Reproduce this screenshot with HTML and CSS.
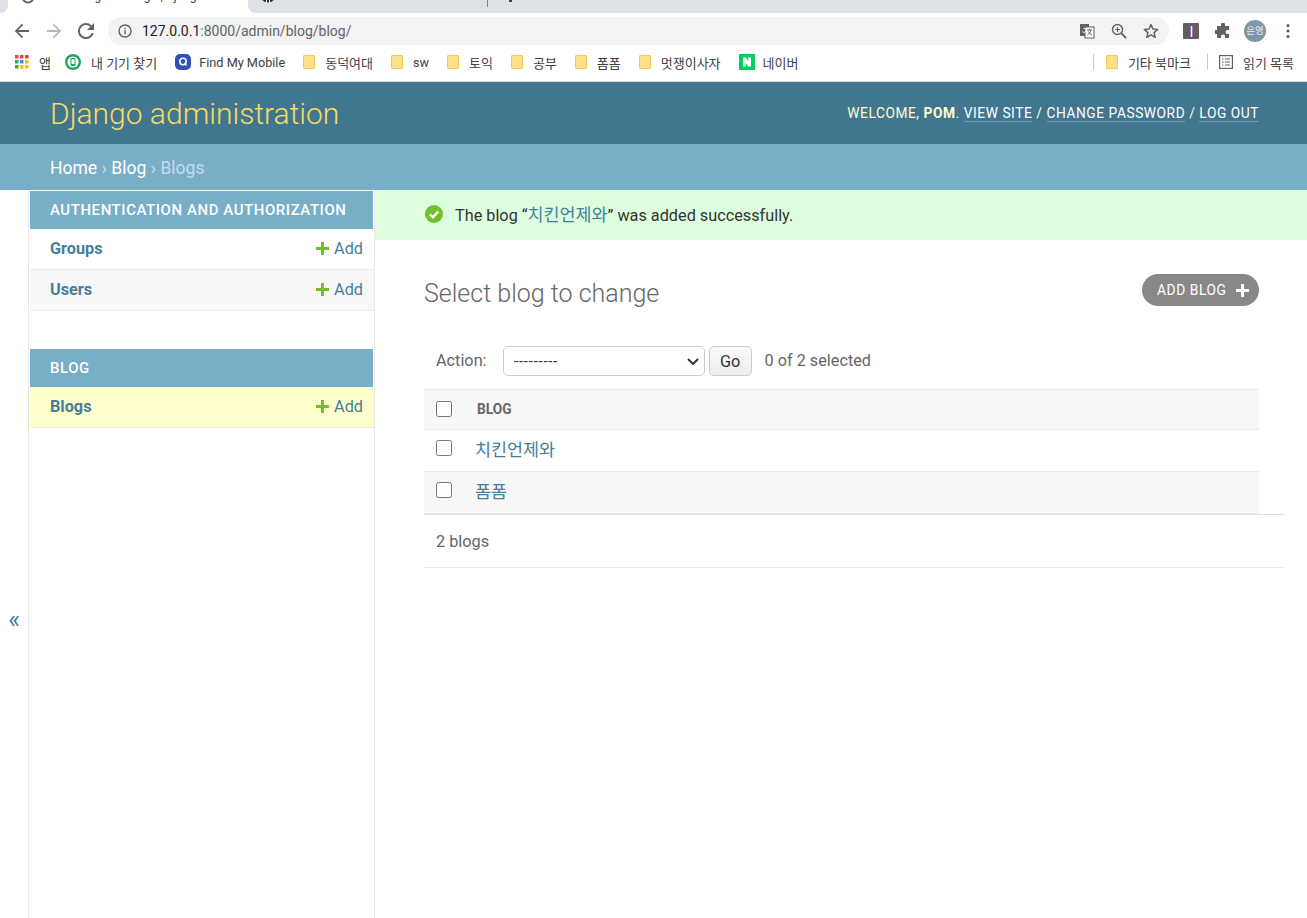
FILE: index.html
```html
<!DOCTYPE html>
<html lang="en">
<head>
    <meta charset="UTF-8">
    <title>Select blog to change | Django site admin</title>
    <link rel="stylesheet" href="styles.css">
</head>
<body>
    <!-- browser chrome -->
    <div class="tabstrip">
        <div class="tab-corner"></div>
        <div class="tab-active">
            <svg width="16" height="16" viewBox="0 0 16 16"><circle cx="8" cy="-3" r="5.500" fill="none" stroke="#5f6368" stroke-width="2"/></svg>
            <span class="tab-title">Select blog to change | Django site admin</span>
        </div>
        <div class="tab-rest">
            <svg width="16" height="16" viewBox="0 0 16 16"><circle cx="8" cy="-5" r="7.500" fill="#24292e"/><path d="M6.500 0v3M9.500 0v3" stroke="#fff" stroke-width="1"/></svg>
            <div class="tab-sep"></div>
            <div class="tab-dot"></div>
        </div>
    </div>
    <div class="toolbar">
        <button class="nav-btn" aria-label="Back">
            <svg width="16" height="16" viewBox="0 0 16 16"><path d="M15 7H4.200l5-5L8 .8 .8 8 8 15.200l1.200-1.200-5-5H15z" fill="#5f6368"/></svg>
        </button>
        <button class="nav-btn" aria-label="Forward">
            <svg width="16" height="16" viewBox="0 0 16 16"><path d="M1 7h10.800l-5-5L8 .8 15.200 8 8 15.200 6.800 14l5-5H1z" fill="#b4b7bb"/></svg>
        </button>
        <button class="nav-btn" aria-label="Reload">
            <svg width="16" height="16" viewBox="0 0 16 16"><path d="M13.600 2.400A7.900 7.900 0 0 0 8 0a8 8 0 1 0 7.700 10h-2.100A6 6 0 1 1 8 2c1.700 0 3.100.7 4.200 1.800L9 7h7V0z" fill="#5f6368"/></svg>
        </button>
        <div class="omnibox">
            <svg class="omni-info" width="14" height="14" viewBox="0 0 14 14"><circle cx="7" cy="7" r="6" fill="none" stroke="#5f6368" stroke-width="1.400"/><rect x="6.300" y="6" width="1.400" height="4.200" fill="#5f6368"/><rect x="6.300" y="3.700" width="1.400" height="1.400" fill="#5f6368"/></svg>
            <span class="omni-url"><span class="omni-host">127.0.0.1</span>:8000/admin/blog/blog/</span>
            <svg class="omni-icon" width="16" height="16" viewBox="0 0 16 16"><rect x="1" y="1" width="9" height="12" fill="#5f6368"/><rect x="6" y="4" width="9" height="11" fill="#fff" stroke="#5f6368"/><path d="M3.500 8.500a2 2 0 1 0 1-3" fill="none" stroke="#fff"/><path d="M8 7h5M10.500 6v1M12 7c-.5 2-2 4-3.500 5M9.500 8.500c.7 1.500 2 3 3.500 3.500" fill="none" stroke="#5f6368"/></svg>
            <svg class="omni-icon" width="16" height="16" viewBox="0 0 16 16"><circle cx="6.500" cy="6.500" r="5" fill="none" stroke="#5f6368" stroke-width="1.500"/><path d="M10.200 10.200 15 15" stroke="#5f6368" stroke-width="1.800"/><path d="M4 6.500h5M6.500 4v5" stroke="#5f6368" stroke-width="1.200"/></svg>
            <svg class="omni-icon" width="16" height="16" viewBox="0 0 16 16"><path d="M8 1.500 9.900 6l4.800.4-3.600 3.200 1.100 4.700L8 11.800l-4.200 2.500 1.100-4.700L1.300 6.400 6.100 6z" fill="none" stroke="#5f6368" stroke-width="1.500" stroke-linejoin="round"/></svg>
        </div>
        <div class="ext-icons">
            <span class="ext-box"><span class="ext-bar"></span></span>
            <svg class="ext-puzzle" width="16" height="16" viewBox="0 0 16 16"><path d="M6 1.500a2 2 0 0 1 4 0V3h4v4h-1.500a2 2 0 0 0 0 4H14v4h-4v-1.500a2 2 0 0 0-4 0V15H2v-4H.5a2 2 0 0 1 0-4H2V3h4z" fill="#5f6368"/></svg>
            <span class="avatar">은영</span>
            <svg class="ext-menu" width="4" height="16" viewBox="0 0 4 16"><circle cx="2" cy="2.500" r="1.600" fill="#5f6368"/><circle cx="2" cy="8" r="1.600" fill="#5f6368"/><circle cx="2" cy="13.500" r="1.600" fill="#5f6368"/></svg>
        </div>
    </div>
    <div class="bookmarks">
        <a class="bm bm-apps">
            <svg class="bm-icon" width="14" height="14" viewBox="0 0 14 14">
                <rect width="3.500" height="3.500" fill="#ea4335"/><rect x="5" width="3.500" height="3.500" fill="#ea4335"/><rect x="10" width="3.500" height="3.500" fill="#ea4335"/>
                <rect y="5" width="3.500" height="3.500" fill="#34a853"/><rect x="5" y="5" width="3.500" height="3.500" fill="#4285f4"/><rect x="10" y="5" width="3.500" height="3.500" fill="#fbbc04"/>
                <rect y="10" width="3.500" height="3.500" fill="#34a853"/><rect x="5" y="10" width="3.500" height="3.500" fill="#fbbc04"/><rect x="10" y="10" width="3.500" height="3.500" fill="#fbbc04"/>
            </svg>앱</a>
        <a class="bm">
            <svg class="bm-icon" width="16" height="16" viewBox="0 0 16 16"><circle cx="8" cy="8" r="6.800" fill="#fff" stroke="#1da462" stroke-width="2.400"/><rect x="5.500" y="4" width="5" height="8" rx="1" fill="#1da462"/><rect x="6.500" y="5" width="3" height="5" fill="#fff"/></svg>내 기기 찾기</a>
        <a class="bm bm-latin">
            <svg class="bm-icon" width="16" height="16" viewBox="0 0 16 16"><rect width="16" height="16" rx="5" fill="#2f50b5"/><circle cx="8" cy="7.500" r="3.200" fill="none" stroke="#fff" stroke-width="1.600"/><path d="m9.500 9.500 2 2" stroke="#fff" stroke-width="1.600"/></svg>Find My Mobile</a>
        <a class="bm"><span class="folder"></span>동덕여대</a>
        <a class="bm bm-sw"><span class="folder"></span>sw</a>
        <a class="bm"><span class="folder"></span>토익</a>
        <a class="bm"><span class="folder"></span>공부</a>
        <a class="bm"><span class="folder"></span>폼폼</a>
        <a class="bm"><span class="folder"></span>멋쟁이사자</a>
        <a class="bm bm-naver">
            <svg class="bm-icon" width="16" height="16" viewBox="0 0 16 16"><rect width="16" height="16" fill="#03cf5d"/><path d="M4 3.500h3l2.200 3.600V3.500H12v9H9L6.800 8.900v3.600H4z" fill="#fff"/></svg>네이버</a>
        <div class="bm-right">
            <span class="bm-divider"></span>
            <a class="bm"><span class="folder"></span>기타 북마크</a>
            <span class="bm-divider bm-divider-2"></span>
            <a class="bm">
                <svg class="bm-icon" width="14" height="14" viewBox="0 0 14 14"><rect x=".6" y=".6" width="12.800" height="12.800" fill="none" stroke="#5f6368" stroke-width="1.200"/><path d="M3 4h1.500M6 4h5M3 7h1.500M6 7h5M3 10h1.500M6 10h5" stroke="#5f6368" stroke-width="1.200"/></svg>읽기 목록</a>
        </div>
    </div>

    <!-- django admin -->
    <div id="header">
        <h1 id="site-name">Django administration</h1>
        <div id="user-tools">
            Welcome, <strong>pom</strong>.
            <a href="#">View site</a> /
            <a href="#">Change password</a> /
            <a href="#">Log out</a>
        </div>
    </div>
    <div class="breadcrumbs"><a href="#">Home</a> › <a href="#">Blog</a> › Blogs</div>

    <div class="main">
        <div class="toggle-nav">«</div>
        <div class="sidebar">
            <div class="module">
                <div class="caption">Authentication and Authorization</div>
                <div class="model-row">
                    <a class="model-name" href="#">Groups</a>
                    <a class="addlink" href="#"><svg width="13" height="13" viewBox="0 0 13 13"><path d="M5 0h3v5h5v3H8v5H5V8H0V5h5z" fill="#70bf2b"/></svg>Add</a>
                </div>
                <div class="model-row alt">
                    <a class="model-name" href="#">Users</a>
                    <a class="addlink" href="#"><svg width="13" height="13" viewBox="0 0 13 13"><path d="M5 0h3v5h5v3H8v5H5V8H0V5h5z" fill="#70bf2b"/></svg>Add</a>
                </div>
            </div>
            <div class="module">
                <div class="caption">Blog</div>
                <div class="model-row current">
                    <a class="model-name" href="#">Blogs</a>
                    <a class="addlink" href="#"><svg width="13" height="13" viewBox="0 0 13 13"><path d="M5 0h3v5h5v3H8v5H5V8H0V5h5z" fill="#70bf2b"/></svg>Add</a>
                </div>
            </div>
        </div>
        <div class="content-wrap">
            <div class="message">
                <svg width="18" height="18" viewBox="0 0 18 18"><circle cx="9" cy="9" r="9" fill="#70bf2b"/><path d="m4.800 9.300 3 3 5.400-5.600" fill="none" stroke="#fff" stroke-width="2.400"/></svg>
                <span>The blog “<a href="#">치킨언제와</a>” was added successfully.</span>
            </div>
            <div class="content">
                <div class="title-row">
                    <h1>Select blog to change</h1>
                    <a class="addbutton" href="#">Add blog<svg width="13" height="13" viewBox="0 0 13 13"><path d="M5 0h3v5h5v3H8v5H5V8H0V5h5z" fill="#fff"/></svg></a>
                </div>
                <div class="changelist">
                    <div class="actions">
                        <label>Action:</label>
                        <span class="select-wrap">
                            <select class="action-select"><option>---------</option></select>
                            <svg class="chevron" width="12" height="7" viewBox="0 0 12 7"><path d="m1 1 5 5 5-5" fill="none" stroke="#333" stroke-width="2"/></svg>
                        </span>
                        <button class="go" type="button">Go</button>
                        <span class="counter">0 of 2 selected</span>
                    </div>
                    <table>
                        <thead>
                            <tr><th class="check"><input type="checkbox"></th><th class="col">Blog</th></tr>
                        </thead>
                        <tbody>
                            <tr><td class="check"><input type="checkbox"></td><td><a href="#">치킨언제와</a></td></tr>
                            <tr class="alt"><td class="check"><input type="checkbox"></td><td><a href="#">폼폼</a></td></tr>
                        </tbody>
                    </table>
                    <div class="paginator">2 blogs</div>
                </div>
            </div>
        </div>
    </div>
</body>
</html>
```

FILE: styles.css
```css
* {
    box-sizing: border-box;
}
html, body {
    height: 100%;
}
body {
    margin: 0;
    height: 100vh;
    overflow: hidden;
    display: flex;
    flex-direction: column;
    font-family: Roboto, "Noto Sans CJK KR", sans-serif;
    font-size: 16.25px;
    color: #333;
    background: #fff;
}
a {
    text-decoration: none;
}

/* browser chrome */
.tabstrip {
    height: 13px;
    flex: none;
    display: flex;
    background: #fff;
    overflow: hidden;
}
.tab-corner {
    width: 8px;
    background: #dee1e6;
    border-radius: 0 0 8px 0;
}
.tab-active {
    width: 240px;
    padding-left: 12px;
    display: flex;
    align-items: flex-start;
    gap: 6px;
    overflow: hidden;
}
.tab-active svg {
    flex: none;
}
.tab-title {
    margin-top: -11px;
    font-size: 12px;
    line-height: 14px;
    color: #3c4043;
    white-space: nowrap;
}
.tab-rest {
    flex: 1;
    padding-left: 12px;
    display: flex;
    align-items: flex-start;
    background: #dee1e6;
    border-radius: 0 0 0 8px;
}
.tab-sep {
    width: 1px;
    height: 7px;
    margin-left: 211px;
    background: #80868b;
}
.tab-dot {
    width: 3px;
    height: 2px;
    margin-left: 21px;
    background: #3c4043;
}
.toolbar {
    height: 36px;
    flex: none;
    display: flex;
    align-items: center;
    padding-left: 6px;
    background: #fff;
}
.nav-btn {
    width: 32px;
    height: 28px;
    padding: 0;
    border: 0;
    background: none;
    display: flex;
    align-items: center;
    justify-content: center;
}
.omnibox {
    margin-left: 6px;
    width: 1061px;
    height: 28px;
    border-radius: 14px;
    background: #f1f3f4;
    display: flex;
    align-items: center;
    padding: 0 10px;
    font-size: 14px;
    color: #5f6368;
}
.omni-info {
    margin-right: 10px;
}
.omni-url {
    flex: 1;
}
.omni-host {
    color: #202124;
}
.omni-icon {
    margin-left: 16px;
}
.ext-icons {
    display: flex;
    align-items: center;
    margin-left: 14px;
}
.ext-box {
    width: 16px;
    height: 16px;
    border-radius: 1px;
    background: #5f5f63;
    display: flex;
    justify-content: center;
    align-items: center;
}
.ext-bar {
    width: 3px;
    height: 11px;
    background: linear-gradient(90deg, #6a7fd8 33%, #fff 33%, #fff 66%, #d86a7f 66%);
}
.ext-puzzle {
    margin-left: 16px;
}
.avatar {
    width: 22px;
    height: 22px;
    margin-left: 13px;
    border-radius: 50%;
    background: #7d97a5;
    color: #eef;
    font-size: 9.500px;
    line-height: 22px;
    text-align: center;
}
.ext-menu {
    margin-left: 20px;
}
.bookmarks {
    height: 33px;
    flex: none;
    display: flex;
    align-items: center;
    padding: 0 13px 6px 15px;
    gap: 18px;
    font-size: 13px;
    background: #fff;
    border-bottom: 1px solid #d3d5d8;
}
.bm {
    display: flex;
    align-items: center;
    color: #3c4043;
    white-space: nowrap;
}
.bm-apps {
    margin-right: -4px;
}
.bm-latin {
    font-size: 12.700px;
}
.bm-latin .bm-icon,
.bm-naver .bm-icon {
    margin-right: 8px;
}
.bm-sw {
    font-size: 12.600px;
}
.bm-icon {
    margin-right: 10px;
}
.folder {
    width: 12px;
    height: 14px;
    margin-right: 10px;
    background: #ffe08f;
    border: 1px solid #f0c94f;
    border-radius: 1px;
}
.bm-right {
    margin-left: auto;
    display: flex;
    align-items: center;
    gap: 12px;
}
.bm-divider {
    width: 1px;
    height: 16px;
    background: #c8cacc;
}
.bm-divider-2 {
    margin-left: 4px;
    margin-right: -1px;
}

/* header */
#header {
    height: 62px;
    flex: none;
    display: flex;
    align-items: center;
    justify-content: space-between;
    padding: 0 48px 0 50px;
    background: #417690;
    color: #ffc;
}
#site-name {
    margin: 0;
    font-size: 30px;
    font-weight: 300;
    color: #f5dd5d;
}
#user-tools {
    font-size: 13.750px;
    text-transform: uppercase;
    letter-spacing: .55px;
}
#user-tools strong {
    font-weight: 700;
}
#user-tools a {
    color: #fff;
    border-bottom: 1px solid rgba(255, 255, 255, .25);
}
.breadcrumbs {
    height: 46px;
    flex: none;
    padding: 1px 50px 0;
    display: flex;
    align-items: center;
    gap: 4.500px;
    background: #79aec8;
    color: #c4dce8;
    font-size: 17.500px;
}
.breadcrumbs a {
    color: #fff;
}

/* main area */
.main {
    flex: 1;
    display: flex;
    min-height: 0;
}
.toggle-nav {
    width: 29px;
    flex: none;
    border-right: 1px solid #eaeaea;
    display: flex;
    align-items: center;
    justify-content: center;
    font-size: 25px;
    color: #447e9b;
    padding-top: 131px;
}
.sidebar {
    width: 346px;
    flex: none;
    padding: 1px 0 0 1px;
    border-right: 1px solid #eaeaea;
}
.module {
    margin-bottom: 38px;
}
.caption {
    height: 38px;
    padding-left: 20px;
    display: flex;
    align-items: center;
    background: #79aec8;
    color: #fff;
    font-size: 14.900px;
    font-weight: 500;
    letter-spacing: .62px;
    text-transform: uppercase;
    margin-right: 1px;
}
.model-row {
    height: 41px;
    padding: 0 11px 2px 20px;
    display: flex;
    align-items: center;
    justify-content: space-between;
    border-bottom: 1px solid #eaeaea;
}
.model-row.alt {
    background: #f8f8f8;
}
.model-row.current {
    background: #ffc;
}
.model-name {
    color: #447e9b;
    font-weight: 700;
}
.addlink {
    display: flex;
    align-items: center;
    gap: 5px;
    color: #447e9b;
}
.content-wrap {
    flex: 1;
    min-width: 0;
}
.message {
    height: 50px;
    padding: 0 0 2px 50px;
    display: flex;
    align-items: center;
    gap: 12px;
    background: #dfd;
}
.message span {
    margin-bottom: 2px;
}
.message a {
    color: #447e9b;
    font-size: 17.400px;
}
.content {
    padding: 0 48px 0 49px;
}
.title-row {
    height: 106px;
    display: flex;
    align-items: center;
    justify-content: space-between;
}
.title-row h1 {
    margin: 0;
    font-size: 25px;
    font-weight: 300;
    color: #666;
}
.addbutton {
    width: 117px;
    height: 32px;
    margin-top: -6px;
    padding-left: 15px;
    display: flex;
    align-items: center;
    gap: 9px;
    border-radius: 16px;
    background: #888;
    color: #fff;
    font-size: 13.750px;
    letter-spacing: .6px;
    text-transform: uppercase;
}
.changelist {
    width: 860px;
}
.actions {
    height: 43px;
    display: flex;
    align-items: flex-start;
    padding-left: 12px;
    color: #666;
    line-height: 30px;
}
.select-wrap {
    position: relative;
    display: block;
    width: 202px;
    height: 30px;
    margin-left: 16px;
}
.action-select {
    width: 100%;
    height: 30px;
    padding: 0 10px;
    appearance: none;
    font: 400 14.700px "Liberation Sans", sans-serif;
    color: #333;
    background: #fff;
    border: 1px solid #ccc;
    border-radius: 5px;
}
.chevron {
    position: absolute;
    right: 6px;
    top: 12px;
}
.go {
    width: 43px;
    height: 30px;
    margin-left: 4px;
    padding: 0;
    font: 400 16.250px Roboto, sans-serif;
    color: #333;
    background: linear-gradient(#fafafa, #ececec);
    border: 1px solid #ccc;
    border-radius: 5px;
}
.counter {
    margin-left: 13px;
}
table {
    width: 835px;
    border-collapse: collapse;
    border-top: 1px solid #eaeaea;
}
th, td {
    padding: 0;
    text-align: left;
    border-bottom: 1px solid #eaeaea;
}
thead tr {
    height: 40px;
    background: #f8f8f8;
}
th {
    padding-bottom: 2px;
}
tbody tr {
    height: 42px;
}
tbody tr.alt {
    background: #f8f8f8;
}
td {
    padding-bottom: 5px;
}
.check {
    width: 51px;
    padding-left: 12px;
}
.check input {
    display: block;
    width: 16px;
    height: 16px;
    margin: 0;
}
.col {
    font-size: 13.750px;
    color: #666;
    text-transform: uppercase;
    padding-left: 2px;
}
td a {
    color: #447e9b;
    font-size: 17.400px;
}
.paginator {
    height: 54px;
    display: flex;
    align-items: center;
    padding-left: 12px;
    color: #666;
    border-top: 1px solid #ddd;
    border-bottom: 1px solid #eaeaea;
}
```
